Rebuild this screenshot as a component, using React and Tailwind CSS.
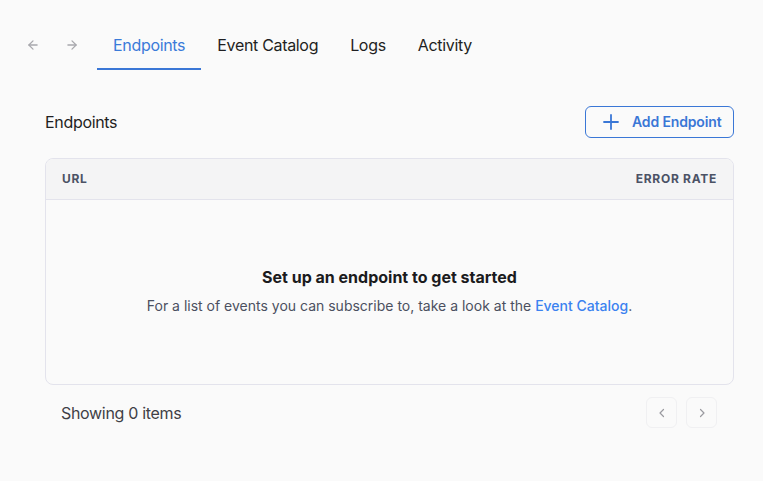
import React from "react";

function ArrowLeft() {
  return (
    <svg width="14" height="14" viewBox="0 0 24 24" fill="none" stroke="#a8a8ad" strokeWidth="2.2" strokeLinecap="round" strokeLinejoin="round">
      <path d="M19 12H5" />
      <path d="M12 19l-7-7 7-7" />
    </svg>
  );
}
function ArrowRight() {
  return (
    <svg width="14" height="14" viewBox="0 0 24 24" fill="none" stroke="#a8a8ad" strokeWidth="2.2" strokeLinecap="round" strokeLinejoin="round">
      <path d="M5 12h14" />
      <path d="M12 5l7 7-7 7" />
    </svg>
  );
}
function Chevron({ dir }) {
  return (
    <svg width="12" height="12" viewBox="0 0 24 24" fill="none" stroke="#9a9aa0" strokeWidth="2.4" strokeLinecap="round" strokeLinejoin="round">
      {dir === "left" ? <path d="M15 5l-7 7 7 7" /> : <path d="M9 5l7 7-7 7" />}
    </svg>
  );
}

export default function App() {
  return (
    <div
      className="w-[763px] h-[481px] bg-[#fafafa] text-[#1f1f22] overflow-hidden"
      style={{ fontFamily: "Inter, 'Noto Sans', sans-serif" }}
    >
      {/* Nav */}
      <div className="flex items-center h-[70px] pt-[22px] pl-[26px]">
        <div className="flex items-center gap-[25px] h-full pb-[2px]">
          <button className="w-[14px] h-[14px] flex items-center justify-center"><ArrowLeft /></button>
          <button className="w-[14px] h-[14px] flex items-center justify-center"><ArrowRight /></button>
        </div>
        <div className="flex items-stretch h-full ml-[18px] tracking-[-0.02em]">
          <div className="px-4 flex items-center text-[16px] text-[#3b7bd9] border-b-2 border-[#3a77d6]">Endpoints</div>
          <div className="px-4 flex items-center text-[16px] text-[#1f1f22] border-b-2 border-transparent">Event Catalog</div>
          <div className="px-4 flex items-center text-[16px] text-[#1f1f22] border-b-2 border-transparent">Logs</div>
          <div className="px-4 flex items-center text-[16px] text-[#1f1f22] border-b-2 border-transparent">Activity</div>
        </div>
      </div>

      {/* Content */}
      <div className="px-[45px] pr-[29px] pt-[36px]">
        <div className="flex items-center justify-between h-[31px]">
          <h2 className="text-[16px] text-[#1f1f22] tracking-[-0.02em]">Endpoints</h2>
          <button className="h-[32px] w-[149px] flex items-center gap-[13px] pl-[17px] border border-[#3a77d6] rounded-[6px] text-[#3a77d6] text-[14px] font-semibold tracking-[-0.01em]">
            <svg width="16" height="16" viewBox="0 0 16 16" fill="none" stroke="#3a77d6" strokeWidth="1.8" strokeLinecap="round">
              <path d="M8 1v14M1 8h14" />
            </svg>
            <span>Add Endpoint</span>
          </button>
        </div>

        <div className="mt-[21px] border border-[#e3e3ec] rounded-[8px] overflow-hidden">
          <div className="h-[41px] bg-[#f4f4f5] border-b border-[#e3e3ec] flex items-center justify-between px-4 text-[12px] font-bold tracking-[0.06em] text-[#4b5265]">
            <span>URL</span>
            <span>ERROR RATE</span>
          </div>
          <div className="h-[184px] pb-[3px] flex flex-col items-center justify-center">
            <div className="text-[16px] font-bold text-[#1b1b1d]">Set up an endpoint to get started</div>
            <div className="mt-[6px] text-[14px] text-[#4b5060]">
              For a list of events you can subscribe to, take a look at the{" "}
              <span className="text-[#3b82f0] font-medium">Event Catalog</span>.
            </div>
          </div>
        </div>

        <div className="flex items-center justify-between pl-4 pr-[17px] mt-[12px]">
          <span className="text-[16px] text-[#3f3f46] tracking-[-0.02em]">Showing 0 items</span>
          <div className="flex items-center gap-[9px]">
            <button className="w-[31px] h-[31px] flex items-center justify-center border border-[#f0f0f2] rounded-[6px] bg-[#fafafa]"><Chevron dir="left" /></button>
            <button className="w-[31px] h-[31px] flex items-center justify-center border border-[#f0f0f2] rounded-[6px] bg-[#fafafa]"><Chevron dir="right" /></button>
          </div>
        </div>
      </div>
    </div>
  );
}
